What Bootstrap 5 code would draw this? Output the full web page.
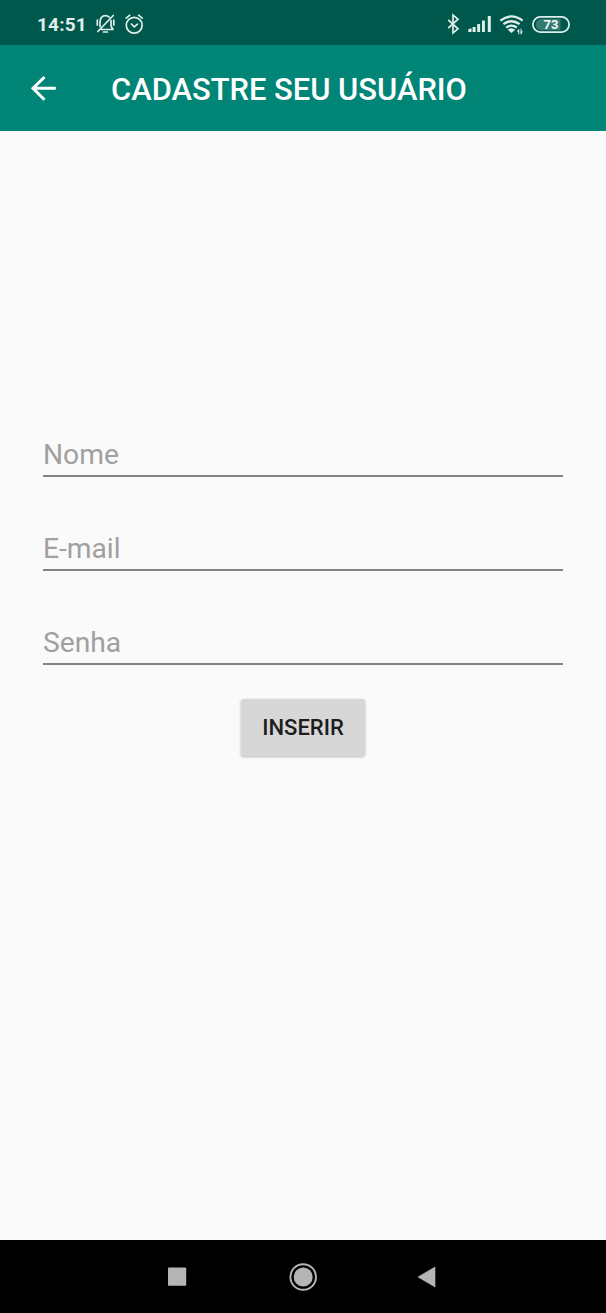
<!DOCTYPE html>
<html lang="pt-BR">
<head>
<meta charset="utf-8">
<meta name="viewport" content="width=device-width, initial-scale=1">
<title>Cadastre seu usuário</title>
<link href="https://cdn.jsdelivr.net/npm/bootstrap@5.3.0/dist/css/bootstrap.min.css" rel="stylesheet">
<style>
body{font-family:Roboto,"Liberation Sans",sans-serif;background:#fafafa}
svg{display:block;flex:none}
.status{height:45px;background:#00574b;color:#e0efec;padding:0 35px 0 37px}
.clock{font:700 19px/45px Roboto,sans-serif;letter-spacing:.2px;width:58px;padding-top:4px;white-space:nowrap}
.appbar{height:86px;background:#008577;padding:0 30px}
.appbar h1{font-size:30.9px;font-weight:500;line-height:40px;margin:4px 0 0 54px;white-space:nowrap}
.back{border:0;background:none;padding:0}
.fields{padding:299px 43px 0}
.field{height:47px;margin-bottom:47px;padding:3px 0 0;border:0;border-bottom:2px solid #838383;border-radius:0;background:transparent;font-size:28.2px;line-height:42px;box-shadow:none!important}
.field::placeholder{color:#a0a0a0;opacity:1}
.last{margin-bottom:34px}
.insert{width:124px;height:57px;background:#d7d7d7;color:#1d1d1d;border:0;border-radius:3px;padding:0;font-size:22px;font-weight:500;box-shadow:0 1px 3px rgba(0,0,0,.27)}
.sysnav{height:73px;background:#000}
</style>
</head>
<body>
<div class="d-flex flex-column vh-100 overflow-hidden">
  <div class="status d-flex align-items-center">
    <span class="clock">14:51</span>
    <svg width="54" height="45" viewBox="95 0 54 45" fill="none" stroke="currentColor" stroke-width="1.7" stroke-linecap="round" stroke-linejoin="round">
      <path d="M100 26.500V22c0-3.800 2.300-6.300 5.500-6.300 1.500 0 2.800.5 3.700 1.400M111 20.500V26l2 3.500H101.500M103.500 32h4M97.800 31.500L113.300 15.500M97.300 20v5M113.800 20v5"/>
      <circle cx="134.200" cy="25.200" r="7.900"/>
      <path d="M131.400 24l2.900 2.800 3.200-2.700M126.200 18.200l3.600-3M142.200 18.200l-3.600-3"/>
    </svg>
    <svg class="ms-auto" width="78" height="45" viewBox="446 0 78 45" fill="none" stroke="currentColor" stroke-width="1.7">
      <path d="M448.200 19.800L458 28.800 453 33V15l5 4.200-9.800 9"/>
      <g fill="currentColor" stroke="none">
        <path d="M468.300 29.300l3.200-1V32h-3.200zM472.600 27h3V32h-3zM477.200 24h2.900v8h-2.900zM482 20.500h2.900V32H482zM487.800 16h3v16h-3z"/>
        <path d="M507.800 29.800Q511.500 26.800 515.200 29.800L511.500 33z"/>
        <path d="M517 31.800l1.300-2.500h1v5h-1v-2.500zM520.500 28.800h1v2.500h1.300l-1.300 3h-1z"/>
      </g>
      <path stroke-width="2.300" d="M500.300 20.700q11.200-8.600 22.400 0M503.400 24.200q8.100-6 16.200 0M506.200 27.500q5.300-3.600 10.600 0"/>
    </svg>
    <svg width="47" height="45" viewBox="524 0 47 45">
      <rect x="532.900" y="16.900" width="36.200" height="15.200" rx="7.600" fill="none" stroke="currentColor" stroke-width="1.700"/>
      <path d="M541.500 18.800h19V30.200h-19a5.700 5.700 0 0 1 0-11.400z" fill="#357a70"/>
      <text x="551" y="29.300" text-anchor="middle" font-family="Roboto,sans-serif" font-size="13" font-weight="700" fill="#f1f8f7">73</text>
    </svg>
  </div>
  <header class="appbar d-flex align-items-center text-white">
    <button class="back" type="button" aria-label="Voltar">
      <svg width="27" height="27" viewBox="30 75 27 27" fill="none" stroke="#fff" stroke-width="3"><path d="M55.800 88.300H32.500M44.500 77L33 88.300 44.500 99.800"/></svg>
    </button>
    <h1>CADASTRE SEU USUÁRIO</h1>
  </header>
  <main class="flex-grow-1">
    <form class="fields d-flex flex-column align-items-center">
      <input class="form-control field" type="text" placeholder="Nome" aria-label="Nome">
      <input class="form-control field" type="email" placeholder="E-mail" aria-label="E-mail">
      <input class="form-control field last" type="password" placeholder="Senha" aria-label="Senha">
      <button class="btn insert" type="button">INSERIR</button>
    </form>
  </main>
  <nav class="sysnav d-flex justify-content-center">
    <svg width="280" height="73" viewBox="163 1240 280 73" fill="#b5b5b5">
      <rect x="168" y="1267.500" width="18.200" height="18.200" rx=".8"/>
      <circle cx="303.200" cy="1277" r="9.500"/>
      <circle cx="303.200" cy="1277" r="12.800" fill="none" stroke="#b5b5b5" stroke-width="1.900"/>
      <path d="M418 1277L435 1267V1287z" stroke="#b5b5b5" stroke-width=".6" stroke-linejoin="round"/>
    </svg>
  </nav>
</div>
<script src="https://cdn.jsdelivr.net/npm/bootstrap@5.3.0/dist/js/bootstrap.bundle.min.js"></script>
</body>
</html>
